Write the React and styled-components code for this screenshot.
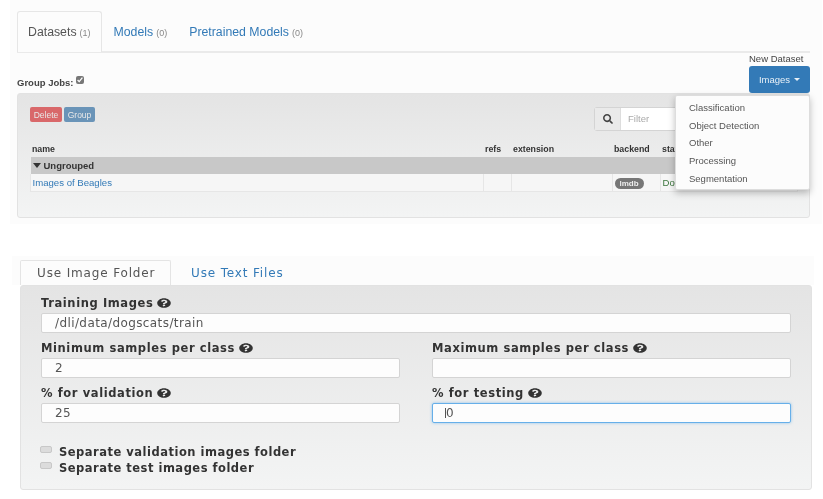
import React from "react";
import styled, { createGlobalStyle } from "styled-components";
import { FaSearch, FaQuestionCircle } from "react-icons/fa";

const GlobalStyle = createGlobalStyle`
  html, body {
    margin: 0;
    padding: 0;
    background: #fff;
  }
  body {
    font-family: "Liberation Sans", Arial, sans-serif;
    color: #333;
  }
`;

const wideFont = `"DejaVu Sans", "Liberation Sans", sans-serif`;

const Page = styled.div`
  width: 823px;
  height: 499px;
  overflow: hidden;
  filter: blur(0.45px);
`;

const Top = styled.section`
  margin-left: 10px;
  width: 812px;
  padding: 11px 12px 0 7px;
  box-sizing: border-box;
  height: 224px;
  background: #fcfcfc;
`;

const TabBar = styled.div`
  display: flex;
  height: 40px;
  border-bottom: 2px solid #eaeaea;
`;

const Tab = styled.div`
  display: flex;
  align-items: center;
  gap: 3px;
  height: 41px;
  box-sizing: border-box;
  padding: 0 10px;
  margin-right: ${(p) => p.$gap || 0}px;
  font-size: 12.3px;
  color: ${(p) => (p.$active ? "#555" : "#337ab7")};
  background: ${(p) => (p.$active ? "#fcfcfc" : "transparent")};
  border: 1px solid ${(p) => (p.$active ? "#e6e6e6" : "transparent")};
  border-bottom: none;
  border-radius: 3px 3px 0 0;
  small {
    font-size: 9px;
    color: #888;
    margin-top: 1px;
  }
`;

const HeaderRow = styled.div`
  display: flex;
  justify-content: space-between;
  align-items: flex-end;
  height: 40px;
`;

const GroupLabel = styled.label`
  display: flex;
  align-items: center;
  gap: 3px;
  margin-bottom: 5px;
  font-size: 9.5px;
  font-weight: bold;
  color: #444;
`;

const SmallCheck = styled.input`
  width: 8px;
  height: 8px;
  margin: 0 0 4px;
  accent-color: #777;
`;

const NewDataset = styled.div`
  position: relative;
  display: flex;
  flex-direction: column;
  width: 61px;
  font-size: 9.5px;
  color: #444;
  span {
    white-space: nowrap;
    margin-bottom: 2px;
  }
`;

const ImagesButton = styled.div`
  display: flex;
  align-items: center;
  justify-content: center;
  gap: 4px;
  height: 27px;
  background: #337ab7;
  border-radius: 3px;
  color: #e8f0f7;
  font-size: 9.5px;
  i {
    width: 0;
    height: 0;
    border-left: 3px solid transparent;
    border-right: 3px solid transparent;
    border-top: 3px solid #e8f0f7;
  }
`;

const Menu = styled.div`
  position: absolute;
  top: 100%;
  right: 0;
  margin-top: 2px;
  width: 135px;
  height: 95px;
  box-sizing: border-box;
  padding: 3px 0;
  background: #fcfcfc;
  border: 1px solid #ddd;
  border-radius: 2px;
  box-shadow: 0 3px 7px rgba(0, 0, 0, 0.25);
  z-index: 2;
`;

const MenuItem = styled.div`
  height: 17.7px;
  line-height: 17.7px;
  padding-left: 13px;
  font-size: 9.5px;
  color: #555;
`;

const Well = styled.div`
  box-sizing: border-box;
  background: linear-gradient(#e4e4e4, #f3f4f4);
  border: 1px solid #e2e2e2;
  border-radius: 3px;
`;

const DatasetWell = styled(Well)`
  height: 125px;
  padding: 13px 12px 0;
`;

const Toolbar = styled.div`
  display: flex;
  justify-content: space-between;
  height: 23px;
  margin-bottom: 11px;
`;

const Buttons = styled.div`
  display: flex;
  gap: 2px;
  height: 15px;
`;

const SmallButton = styled.div`
  display: flex;
  align-items: center;
  justify-content: center;
  width: ${(p) => p.$w}px;
  height: 15px;
  border-radius: 2px;
  font-size: 8.5px;
  color: #e8e8e8;
  background: ${(p) => p.$bg};
`;

const Search = styled.div`
  display: flex;
  width: 201px;
  height: 22px;
  border: 1px solid #d4d4d4;
  border-radius: 3px;
`;

const SearchAddon = styled.div`
  display: flex;
  align-items: center;
  justify-content: center;
  width: 25px;
  color: #444;
  font-size: 10px;
  background: #eaeaea;
  border-right: 1px solid #ddd;
`;

const SearchInput = styled.div`
  flex: 1;
  padding-left: 7px;
  line-height: 21px;
  font-size: 9.5px;
  color: #aaa;
  background: #fff;
`;

const Table = styled.table`
  width: 767px;
  table-layout: fixed;
  border-collapse: collapse;
  font-size: 8.8px;
  th {
    height: 16px;
    padding: 0 1.5px;
    text-align: left;
    color: #333;
  }
`;

const GroupRow = styled.tr`
  td {
    height: 17px;
    padding: 0 2px;
    background: #c8c8c8;
    font-size: 9.5px;
    font-weight: bold;
    color: #333;
  }
  i {
    display: inline-block;
    width: 0;
    height: 0;
    margin-right: 3px;
    vertical-align: 1px;
    border-left: 4px solid transparent;
    border-right: 4px solid transparent;
    border-top: 5px solid #333;
  }
`;

const DataRow = styled.tr`
  td {
    height: 17px;
    padding: 0 1.5px;
    background: #f6f6f6;
    border: 1px solid #e6e6e6;
    border-top: none;
    font-size: 9.6px;
  }
  a {
    color: #337ab7;
  }
`;

const Badge = styled.span`
  display: inline-block;
  padding: 0 5px;
  line-height: 11px;
  border-radius: 6px;
  background: #777;
  color: #eee;
  font-size: 8px;
  font-weight: bold;
`;

const Done = styled.span`
  color: #3c763d;
`;

const Bottom = styled.section`
  margin: 32px 0 0 12px;
  width: 802px;
  padding: 4px 2px 0 8px;
  box-sizing: border-box;
  background: linear-gradient(#fcfcfc 29px, #fff 29px);
`;

const FormTabs = styled.div`
  display: flex;
  align-items: stretch;
  height: 25px;
`;

const FormTab = styled.div`
  display: flex;
  align-items: center;
  width: ${(p) => p.$w}px;
  box-sizing: border-box;
  padding-left: ${(p) => p.$pad}px;
  font: 12px ${wideFont};
  letter-spacing: 0.85px;
  color: ${(p) => (p.$active ? "#555" : "#337ab7")};
  background: ${(p) => (p.$active ? "#fcfcfc" : "transparent")};
  border: 1px solid ${(p) => (p.$active ? "#e4e4e4" : "transparent")};
  border-bottom: none;
  border-radius: 2px 2px 0 0;
`;

const FormWell = styled(Well)`
  height: 205px;
  padding: 9px 20px 0;
  width: 792px;
`;

const Grid = styled.div`
  display: grid;
  grid-template-columns: 359px 359px;
  column-gap: 32px;
  row-gap: 7px;
`;

const Field = styled.div`
  grid-column: ${(p) => (p.$wide ? "1 / span 2" : "auto")};
`;

const Label = styled.label`
  display: flex;
  align-items: center;
  gap: 3px;
  height: 16px;
  margin-bottom: 2px;
  font: bold 11.5px ${wideFont};
  letter-spacing: 0.6px;
  color: #333;
  svg {
    width: 14px;
    height: 10px;
    margin: -1px 0 0 1px;
  }
`;

const Input = styled.input`
  display: block;
  width: 100%;
  height: 20px;
  box-sizing: border-box;
  padding: 0 13px;
  border: 1px solid ${(p) => (p.$focus ? "#66afe9" : "#d4d4d4")};
  border-radius: 2px;
  outline: none;
  background: #fdfdfd;
  box-shadow: ${(p) => (p.$focus ? "0 0 3px rgba(102, 175, 233, 0.7)" : "none")};
  font: 12px ${wideFont};
  letter-spacing: 0.4px;
  color: #555;
`;

const Caret = styled.div`
  position: relative;
  &::after {
    content: "";
    position: absolute;
    left: 13px;
    top: 5px;
    width: 1px;
    height: 10px;
    background: #555;
  }
`;

const Checks = styled.div`
  display: flex;
  flex-direction: column;
  gap: 5px;
  margin-top: 23px;
`;

const CheckRow = styled.label`
  display: flex;
  align-items: center;
  gap: 7px;
  height: 11px;
  font: bold 11.5px ${wideFont};
  letter-spacing: 0.5px;
  color: #333;
`;

const CheckBox = styled.span`
  width: 12px;
  height: 7px;
  margin: -4px 0 0 -1px;
  background: #dcdcdc;
  border: 1px solid #c8c8c8;
  border-radius: 2px;
  box-sizing: border-box;
`;

const columns = [453, 28, 101, 48, 137];
const menuItems = ["Classification", "Object Detection", "Other", "Processing", "Segmentation"];

const Help = () => <FaQuestionCircle preserveAspectRatio="none" />;

const App = () => {
  return (
    <Page>
      <GlobalStyle />
      <Top>
        <TabBar>
          <Tab $active $gap={1}>
            Datasets <small>(1)</small>
          </Tab>
          <Tab>
            Models <small>(0)</small>
          </Tab>
          <Tab>
            Pretrained Models <small>(0)</small>
          </Tab>
        </TabBar>
        <HeaderRow>
          <GroupLabel>
            Group Jobs: <SmallCheck type="checkbox" defaultChecked />
          </GroupLabel>
          <NewDataset>
            <span>New Dataset</span>
            <ImagesButton>
              Images <i />
            </ImagesButton>
            <Menu>
              {menuItems.map((item) => (
                <MenuItem key={item}>{item}</MenuItem>
              ))}
            </Menu>
          </NewDataset>
        </HeaderRow>
        <DatasetWell>
          <Toolbar>
            <Buttons>
              <SmallButton $w={32} $bg="#d9686a">Delete</SmallButton>
              <SmallButton $w={31} $bg="#6a94b8">Group</SmallButton>
            </Buttons>
            <Search>
              <SearchAddon>
                <FaSearch />
              </SearchAddon>
              <SearchInput>Filter</SearchInput>
            </Search>
          </Toolbar>
          <Table>
            <colgroup>
              {columns.map((w, i) => (
                <col key={i} style={{ width: w }} />
              ))}
            </colgroup>
            <thead>
              <tr>
                <th>name</th>
                <th>refs</th>
                <th>extension</th>
                <th>backend</th>
                <th>status</th>
              </tr>
            </thead>
            <tbody>
              <GroupRow>
                <td colSpan={5}>
                  <i />
                  Ungrouped
                </td>
              </GroupRow>
              <DataRow>
                <td>
                  <a>Images of Beagles</a>
                </td>
                <td />
                <td />
                <td>
                  <Badge>lmdb</Badge>
                </td>
                <td>
                  <Done>Done</Done>
                </td>
              </DataRow>
            </tbody>
          </Table>
        </DatasetWell>
      </Top>
      <Bottom>
        <FormTabs>
          <FormTab $active $w={151} $pad={16}>Use Image Folder</FormTab>
          <FormTab $w={140} $pad={19}>Use Text Files</FormTab>
        </FormTabs>
        <FormWell>
          <Grid>
            <Field $wide>
              <Label>
                Training Images <Help />
              </Label>
              <Input defaultValue="/dli/data/dogscats/train" />
            </Field>
            <Field>
              <Label>
                Minimum samples per class <Help />
              </Label>
              <Input defaultValue="2" />
            </Field>
            <Field>
              <Label>
                Maximum samples per class <Help />
              </Label>
              <Input />
            </Field>
            <Field>
              <Label>
                % for validation <Help />
              </Label>
              <Input defaultValue="25" />
            </Field>
            <Field>
              <Label>
                % for testing <Help />
              </Label>
              <Caret>
                <Input $focus defaultValue="0" />
              </Caret>
            </Field>
          </Grid>
          <Checks>
            <CheckRow>
              <CheckBox />
              Separate validation images folder
            </CheckRow>
            <CheckRow>
              <CheckBox />
              Separate test images folder
            </CheckRow>
          </Checks>
        </FormWell>
      </Bottom>
    </Page>
  );
};

export default App;
